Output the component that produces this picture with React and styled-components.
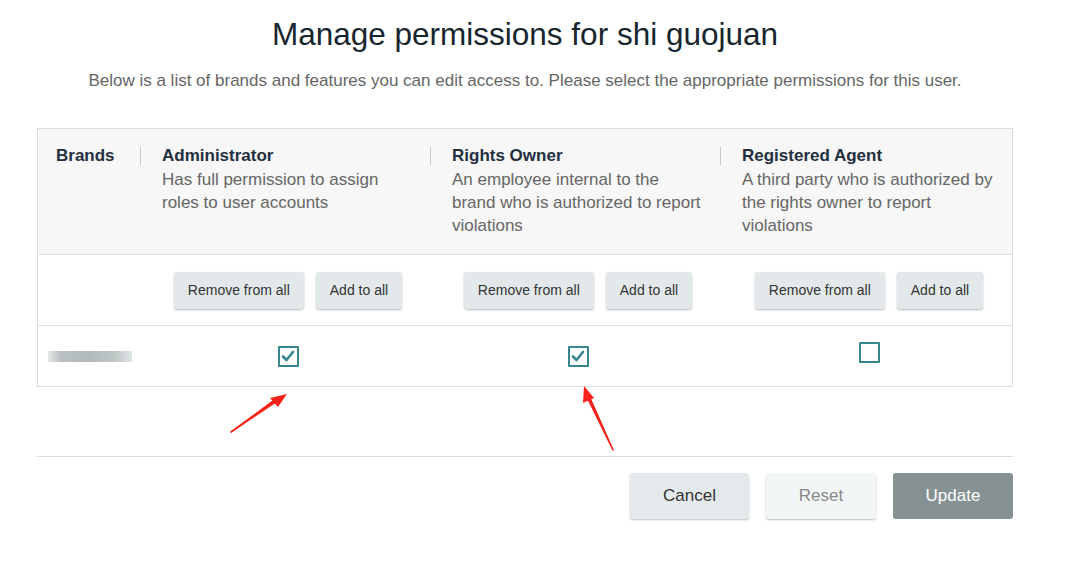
import React from 'react'
import styled, { createGlobalStyle } from 'styled-components'

const Global = createGlobalStyle`
  body {
    margin: 0;
    background: #fff;
    font-family: "Liberation Sans", Arial, sans-serif;
  }
`

const roles = [
  {
    title: 'Administrator',
    text: 'Has full permission to assign roles to user accounts',
    checked: true,
  },
  {
    title: 'Rights Owner',
    text: 'An employee internal to the brand who is authorized to report violations',
    checked: true,
  },
  {
    title: 'Registered Agent',
    text: 'A third party who is authorized by the rights owner to report violations',
    checked: false,
  },
]

const Check = () => (
  <svg width="14" height="12" viewBox="0 0 14 12">
    <path d="M2 6.5 L5.5 10 L12 2" fill="none" stroke="#37868d" strokeWidth="2.6" strokeLinecap="round" strokeLinejoin="round" />
  </svg>
)

const Arrows = () => (
  <Overlay width="1080" height="567" viewBox="0 0 1080 567">
    <path d="M231 432 L276 399 L277 401 Z" fill="#f5211b" stroke="#f5211b" strokeWidth="1.6" strokeLinejoin="round" />
    <polygon points="287,394 270,398 278,407" fill="#f5211b" />
    <path d="M613 450 L590 398 L588 399 Z" fill="#f5211b" stroke="#f5211b" strokeWidth="1.6" strokeLinejoin="round" />
    <polygon points="584,386 583,403 594,398" fill="#f5211b" />
  </Overlay>
)

const App = () => {
  return (
    <Page>
      <Global />
      <Title>Manage permissions for shi guojuan</Title>
      <Intro>
        Below is a list of brands and features you can edit access to. Please select the appropriate permissions for this user.
      </Intro>
      <Table>
        <HeadRow>
          <BrandHead>Brands</BrandHead>
          {roles.map((r) => (
            <RoleHead key={r.title}>
              <RoleTitle>{r.title}</RoleTitle>
              <RoleText>{r.text}</RoleText>
            </RoleHead>
          ))}
        </HeadRow>
        <Row $h={70}>
          <Cell />
          {roles.map((r) => (
            <Cell key={r.title} $center>
              <SmallBtn>Remove from all</SmallBtn>
              <SmallBtn>Add to all</SmallBtn>
            </Cell>
          ))}
        </Row>
        <Row $h={60} $last>
          <Cell>
            <Blurred />
          </Cell>
          {roles.map((r) => (
            <Cell key={r.title} $center>
              <Box $up={!r.checked}>{r.checked && <Check />}</Box>
            </Cell>
          ))}
        </Row>
      </Table>
      <Footer>
        <BigBtn $w={119}>Cancel</BigBtn>
        <BigBtn $w={110} $kind="reset">Reset</BigBtn>
        <BigBtn $w={120} $kind="primary">Update</BigBtn>
      </Footer>
      <Arrows />
    </Page>
  )
}

export default App

const Page = styled.div`
  position: relative;
  width: 976px;
  height: 567px;
  padding: 0 0 0 37px;
  overflow: hidden;
`

const Overlay = styled.svg`
  position: absolute;
  left: 0;
  top: 0;
  pointer-events: none;
`

const Title = styled.h1`
  margin: 0;
  padding-top: 16px;
  text-align: center;
  font-size: 31.5px;
  line-height: 36px;
  font-weight: 400;
  color: #17252e;
`

const Intro = styled.p`
  margin: 0;
  padding-top: 19px;
  text-align: center;
  font-size: 17px;
  line-height: 20px;
  color: #666;
`

const Table = styled.div`
  margin-top: 37px;
  border: 1px solid #dcdcdc;
`

const HeadRow = styled.div`
  display: grid;
  grid-template-columns: 102px 290px 290px 1fr;
  height: 125px;
  background: #f7f7f7;
  border-bottom: 1px solid #dedede;
`

const BrandHead = styled.div`
  padding: 17px 0 0 18px;
  font-size: 17px;
  line-height: 20px;
  font-weight: 700;
  color: #232f3e;
`

const RoleHead = styled.div`
  position: relative;
  padding: 17px 14px 0 22px;
  &::before {
    content: '';
    position: absolute;
    left: 0;
    top: 18px;
    height: 18px;
    border-left: 1px solid #c8c8c8;
  }
`

const RoleTitle = styled.div`
  font-size: 17px;
  line-height: 20px;
  font-weight: 700;
  color: #232f3e;
`

const RoleText = styled.div`
  margin-top: 2px;
  font-size: 17px;
  line-height: 23px;
  color: #666;
`

const Row = styled.div`
  display: grid;
  grid-template-columns: 102px 290px 290px 1fr;
  height: ${(p) => p.$h}px;
  border-bottom: ${(p) => (p.$last ? 'none' : '1px solid #dedede')};
`

const Cell = styled.div`
  display: flex;
  align-items: center;
  justify-content: ${(p) => (p.$center ? 'center' : 'flex-start')};
  gap: 12px;
  padding-left: ${(p) => (p.$center ? '6px' : '0')};
`

const SmallBtn = styled.button`
  height: 37px;
  padding: 0 14px;
  border: none;
  border-radius: 3px;
  background: #e3e9eb;
  box-shadow: 0 1px 2px rgba(0, 0, 0, 0.28);
  font-family: "Liberation Sans", Arial, sans-serif;
  font-size: 14px;
  color: #333;
`

const Box = styled.div`
  width: 17px;
  height: 17px;
  margin-top: ${(p) => (p.$up ? '-7px' : '0')};
  border: 2px solid #37868d;
  border-radius: 1px;
  display: flex;
  align-items: center;
  justify-content: center;
`

const Blurred = styled.div`
  margin-left: 10px;
  width: 84px;
  height: 11px;
  background: linear-gradient(90deg, #e6e8e8 0%, #b9c0c2 15%, #b2babc 50%, #bfc6c6 80%, #dfe5e6 100%);
  filter: blur(0.6px);
`

const Footer = styled.div`
  margin-top: 69px;
  border-top: 1px solid #dcdcdc;
  padding-top: 16px;
  display: flex;
  justify-content: flex-end;
  gap: 17px;
`

const BigBtn = styled.button`
  width: ${(p) => p.$w}px;
  height: 46px;
  border: none;
  border-radius: 3px;
  font-family: "Liberation Sans", Arial, sans-serif;
  font-size: 17px;
  background: ${(p) => (p.$kind === 'primary' ? '#869193' : p.$kind === 'reset' ? '#f3f6f7' : '#e4eaec')};
  color: ${(p) => (p.$kind === 'primary' ? '#fff' : p.$kind === 'reset' ? '#888' : '#333')};
  box-shadow: ${(p) => (p.$kind === 'primary' ? 'none' : '0 1px 2px rgba(0, 0, 0, 0.25)')};
`
